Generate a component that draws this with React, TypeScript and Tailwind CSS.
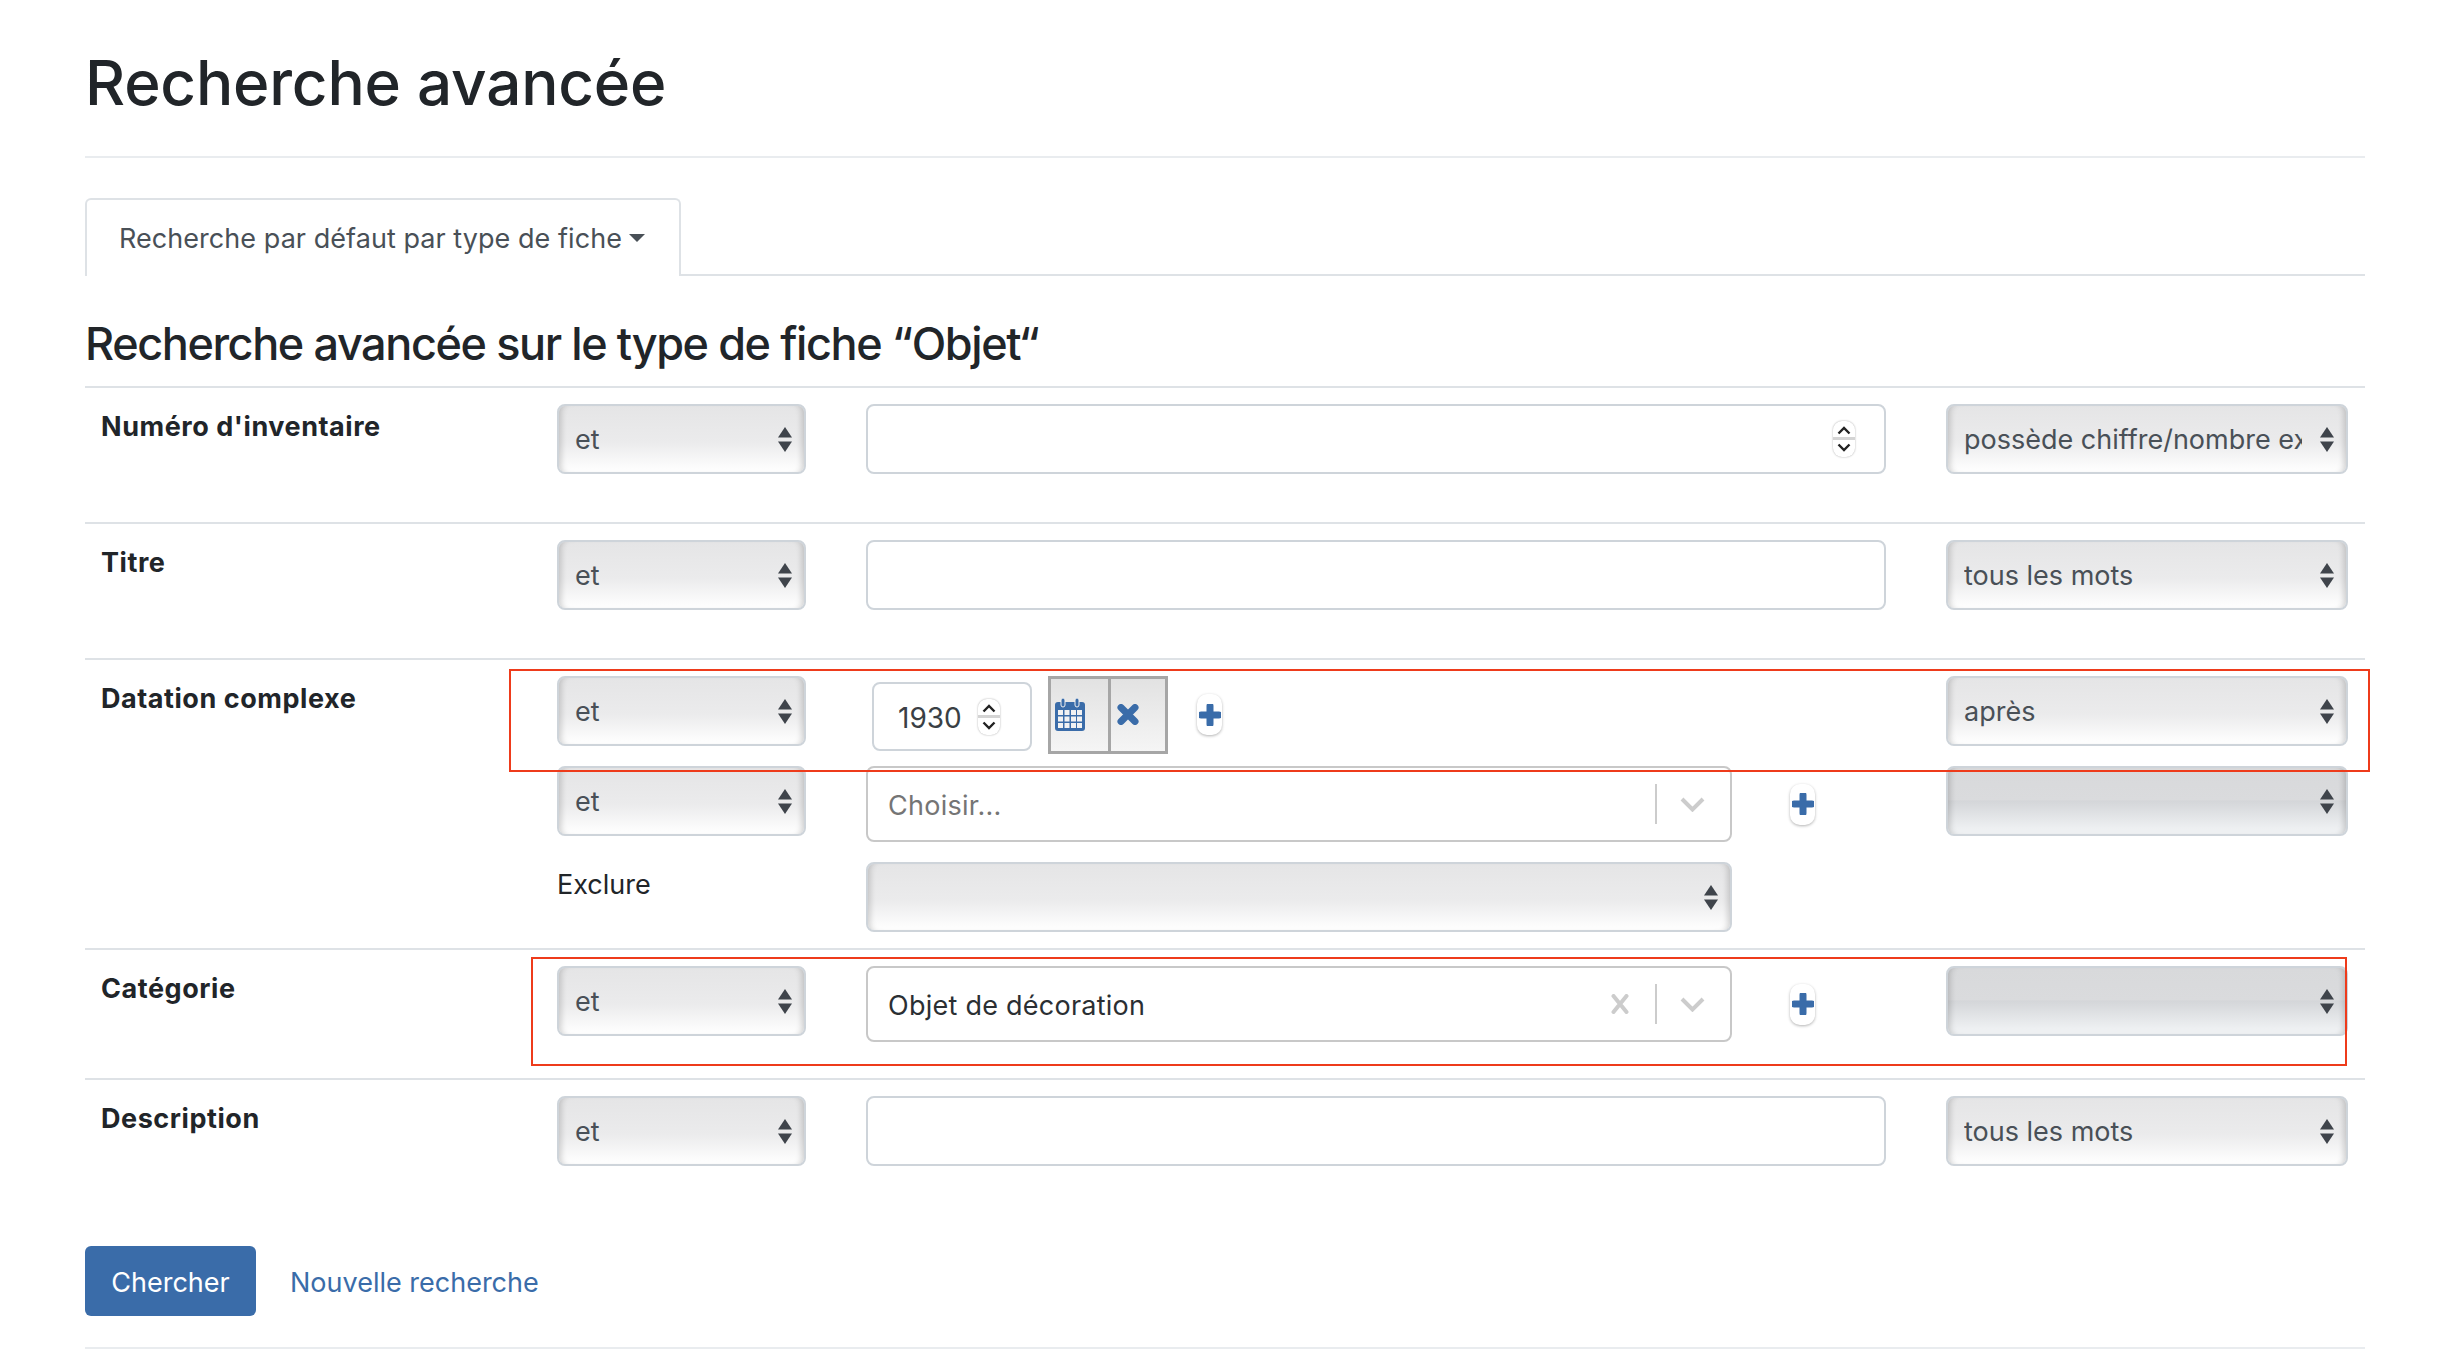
import React from "react";

const FONT = "[font-family:Inter,'Noto_Sans',sans-serif]";

function Arrows() {
  return (
    <svg width="14" height="25" viewBox="0 0 14 25" className="shrink-0">
      <path d="M7 0 L14 10.5 L0 10.5 Z" fill="#3f444b" />
      <path d="M0 14.5 L14 14.5 L7 25 Z" fill="#3f444b" />
    </svg>
  );
}

function Select({ text, muted, w, clip }: { text?: string; muted?: boolean; w: string; clip?: string }) {
  return (
    <div
      className={`${w} h-[70px] shrink-0 flex items-center justify-between pl-[16px] pr-[12px] rounded-[8px] border-2 border-[#ced4da] shadow-[inset_7px_0_6px_-5px_rgba(0,0,0,0.18),inset_-7px_0_6px_-5px_rgba(0,0,0,0.18)] ${
        muted
          ? "bg-[linear-gradient(#d8d9db_0%,#dadbdd_48%,#d4d6d9_50%,#eef0f2_92%)]"
          : "bg-[linear-gradient(#e5e5e6_0%,#ebebec_55%,#fdfdfd_95%)]"
      }`}
    >
      <span className={`${clip ?? ""} overflow-hidden whitespace-nowrap text-[27px] leading-[36px] pt-[2px] text-[#495057]`}>{text}</span>
      <Arrows />
    </div>
  );
}

function Spinner() {
  return (
    <div className="w-[22px] h-[36px] shrink-0 rounded-[9px] bg-white shadow-[0_0_2px_rgba(0,0,0,0.35)] flex flex-col items-center justify-between py-[5px] relative">
      <svg width="14" height="9" viewBox="0 0 14 9"><path d="M1.5 7.5 L7 2 L12.5 7.5" fill="none" stroke="#222" strokeWidth="2.4" /></svg>
      <div className="absolute left-0 right-0 top-[16px] h-[3px] bg-[#d4d4d4]" />
      <svg width="14" height="9" viewBox="0 0 14 9"><path d="M1.5 1.5 L7 7 L12.5 1.5" fill="none" stroke="#222" strokeWidth="2.4" /></svg>
    </div>
  );
}

function TextBox({ spinner }: { spinner?: boolean }) {
  return (
    <div className="w-[1020px] h-[70px] rounded-[8px] border-2 border-[#ced4da] bg-white flex items-center justify-end pr-[29px]">
      {spinner && <Spinner />}
    </div>
  );
}

function PlusButton() {
  return (
    <div className="w-[25px] h-[41px] shrink-0 rounded-[10px] bg-white shadow-[0_1px_3px_rgba(0,0,0,0.3)] flex items-center justify-center">
      <svg width="22" height="22" viewBox="0 0 22 22">
        <path d="M11 2 V20 M2 11 H20" stroke="#3a6ca9" strokeWidth="7" strokeLinecap="round" fill="none" />
      </svg>
    </div>
  );
}

function Chevron() {
  return (
    <svg width="25" height="15" viewBox="0 0 25 15">
      <path d="M2 2 L12.5 12.5 L23 2" fill="none" stroke="#cccccc" strokeWidth="4" />
    </svg>
  );
}

function Combo({ value, placeholder }: { value?: string; placeholder?: string }) {
  return (
    <div className="w-[866px] h-[76px] shrink-0 rounded-[8px] border-2 border-[#c8c8c8] bg-white flex items-center pl-[20px] pr-[25px]">
      <span className={`flex-1 text-[27px] leading-[36px] pt-[3px] tracking-[0.25px] ${value ? "text-[#2b2f33]" : "text-[#757575]"}`}>{value ?? placeholder}</span>
      {value && (
        <svg width="18" height="20" viewBox="0 0 18 20" className="mr-[26px]">
          <path d="M2.5 2 L15.5 18 M15.5 2 L2.5 18" stroke="#cccccc" strokeWidth="4" strokeLinecap="round" />
        </svg>
      )}
      <div className="w-[2px] h-[40px] bg-[#cccccc] mr-[23px]" />
      <Chevron />
    </div>
  );
}

function DateGroup() {
  return (
    <div className="flex items-start gap-[16px] ml-[6px]">
      <div className="w-[160px] h-[69px] mt-[6px] rounded-[8px] border-2 border-[#ced4da] bg-white flex items-center pl-[24px] gap-[16px]">
        <span className="text-[28px] leading-[36px] pt-[3px] text-[#3a3f45]">1930</span>
        <Spinner />
      </div>
      <div className="flex w-[120px] h-[78px] border-[3px] border-[#a6a6a6]">
        <div className="w-[60px] shrink-0 border-r-[3px] border-[#a6a6a6] flex items-center pl-[4px] bg-[linear-gradient(#e2e2e2,#f5f5f5)] pb-[2px]">
          <svg width="30" height="33" viewBox="0 0 30 33">
            <rect x="0" y="4" width="30" height="29" rx="3" fill="#3a6ca9" />
            <rect x="6" y="0" width="4" height="9" rx="2" fill="#3a6ca9" stroke="#f0f0f0" strokeWidth="1" />
            <rect x="20" y="0" width="4" height="9" rx="2" fill="#3a6ca9" stroke="#f0f0f0" strokeWidth="1" />
            <g fill="#f2f2f2">
              <rect x="3" y="12" width="5" height="5" /><rect x="9.5" y="12" width="5" height="5" /><rect x="16" y="12" width="5" height="5" /><rect x="22" y="12" width="5" height="5" />
              <rect x="3" y="18.5" width="5" height="5" /><rect x="9.5" y="18.5" width="5" height="5" /><rect x="16" y="18.5" width="5" height="5" /><rect x="22" y="18.5" width="5" height="5" />
              <rect x="3" y="25" width="5" height="5" /><rect x="9.5" y="25" width="5" height="5" /><rect x="16" y="25" width="5" height="5" /><rect x="22" y="25" width="5" height="5" />
            </g>
          </svg>
        </div>
        <div className="flex-1 flex items-center pl-[6px] pb-[2px] bg-[linear-gradient(#e2e2e2,#f5f5f5)]">
          <svg width="22" height="21" viewBox="0 0 22 21">
            <path d="M4 3.5 L18 17.5 M18 3.5 L4 17.5" stroke="#3a6ca9" strokeWidth="7" strokeLinecap="round" />
          </svg>
        </div>
      </div>
      <div className="ml-[13px] mt-[18px]"><PlusButton /></div>
    </div>
  );
}

function Sub({ h, a, b, c }: { h: string; a: React.ReactNode; b: React.ReactNode; c?: React.ReactNode }) {
  return (
    <div className={`flex ${h}`}>
      <div className="w-[249px] shrink-0">{a}</div>
      <div className="w-[1080px] shrink-0 ml-[60px]">{b}</div>
      <div className="w-[402px] shrink-0">{c}</div>
    </div>
  );
}

function Row({ label, h, children }: { label: string; h: string; children: React.ReactNode }) {
  return (
    <div className={`flex ${h} border-t-2 border-[#dee2e6] pt-[16px]`}>
      <div className="w-[472px] shrink-0 pl-[16px] pt-[4px] text-[27px] leading-[37px] tracking-[0.55px] font-bold text-[#212529]">{label}</div>
      <div>{children}</div>
    </div>
  );
}

const S = (t?: string, muted?: boolean) => <Select text={t} muted={muted} w="w-[249px]" />;
const R = (t?: string, muted?: boolean, clip?: string) => <Select text={t} muted={muted} w="w-[402px]" clip={clip} />;

export default function App() {
  return (
    <div className={`${FONT} relative h-[1372px] w-[2441px] overflow-hidden bg-white pl-[85px]`}>
      <div className="w-[2280px]">
        <div className="h-[158px] border-b-2 border-[#e9ecef] pt-[48px]">
          <h1 className="text-[62px] leading-[70px] font-medium tracking-[-0.2px] text-[#212529]">Recherche avancée</h1>
        </div>
        <div className="mt-[40px] h-[78px] border-b-2 border-[#dee2e6]">
          <div className="w-[596px] h-[78px] rounded-t-[6px] border-2 border-b-0 border-[#dee2e6] bg-white pl-[32px] pt-[20px] flex items-start">
            <span className="text-[27px] leading-[37px] tracking-[0.05px] text-[#495057]">Recherche par défaut par type de fiche</span>
            <span className="ml-[7px] mt-[14px] w-0 h-0 border-x-[8px] border-x-transparent border-t-[8px] border-t-[#495057]" />
          </div>
        </div>
        <h2 className="mt-[41px] h-[69px] text-[45px] leading-[54px] font-medium tracking-[-1.4px] text-[#212529]">
          Recherche avancée sur le type de fiche “Objet“
        </h2>

        <Row label="Numéro d'inventaire" h="h-[136px]">
          <Sub h="h-[70px]" a={S("et")} b={<TextBox spinner />} c={R("possède chiffre/nombre exact", false, "w-[338px]")} />
        </Row>
        <Row label="Titre" h="h-[136px]">
          <Sub h="h-[70px]" a={S("et")} b={<TextBox />} c={R("tous les mots")} />
        </Row>
        <Row label="Datation complexe" h="h-[290px]">
          <Sub h="h-[90px]" a={S("et")} b={<DateGroup />} c={R("après")} />
          <Sub
            h="h-[96px]"
            a={S("et")}
            b={<div className="flex items-center gap-[58px]"><Combo placeholder="Choisir..." /><PlusButton /></div>}
            c={R(undefined, true)}
          />
          <div className="flex">
            <div className="w-[249px] shrink-0 pt-[4px] text-[27px] leading-[37px] text-[#212529]">Exclure</div>
            <div className="ml-[60px]"><Select w="w-[866px]" /></div>
          </div>
        </Row>
        <Row label="Catégorie" h="h-[130px]">
          <Sub
            h="h-[76px]"
            a={S("et")}
            b={<div className="flex items-center gap-[58px]"><Combo value="Objet de décoration" /><PlusButton /></div>}
            c={R(undefined, true)}
          />
        </Row>
        <Row label="Description" h="h-[168px]">
          <Sub h="h-[70px]" a={S("et")} b={<TextBox />} c={R("tous les mots")} />
        </Row>

        <div className="h-[103px] border-b-2 border-[#e9ecef] flex items-start gap-[34px]">
          <button className="w-[171px] h-[70px] rounded-[6px] bg-[#3a6ca9] text-white text-[27px] leading-[36px] pt-[3px]">Chercher</button>
          <a className="mt-[18px] text-[27px] leading-[37px] text-[#3a6ca9]">Nouvelle recherche</a>
        </div>
      </div>

      <div className="absolute left-[509px] top-[669px] w-[1861px] h-[103px] border-2 border-[#ee3b1b]" />
      <div className="absolute left-[531px] top-[957px] w-[1816px] h-[109px] border-2 border-[#ee3b1b]" />
    </div>
  );
}
